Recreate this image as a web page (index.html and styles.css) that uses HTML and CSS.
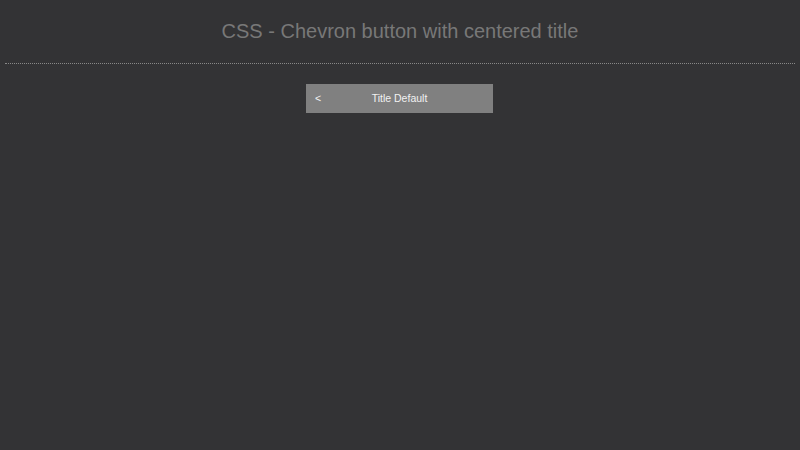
FILE: index.html
```html
<!DOCTYPE html>
<html>
<head>
<meta charset="utf-8">
<link rel="stylesheet" href="styles.css">
</head>
<body>
<header class="header"><h1 class="title">CSS - Chevron button with centered title</h1></header>
<main class="main">
  <div class="btn"><span class="chev">&lt;</span><span class="btn-title">Title Default</span></div>
</main>
</body>
</html>
```
FILE: styles.css
```css
html, body { margin: 0; padding: 0; }
body {
  background: #333335;
  font-family: "Liberation Sans", Arial, sans-serif;
  width: 800px;
  height: 450px;
}
.header {
  margin: 0 5px;
  border-bottom: 1px dotted #888;
  height: 63px;
  display: flex;
  justify-content: center;
}
.title {
  margin: 0;
  padding-top: 20px;
  font-size: 20px;
  font-weight: normal;
  color: #787878;
  line-height: 23px;
}
.main {
  display: flex;
  justify-content: center;
  padding-top: 20px;
  padding-right: 1px;
}
.btn {
  position: relative;
  width: 187px;
  height: 29px;
  background: #808080;
  display: flex;
  align-items: center;
  justify-content: center;
  color: #f2f2f2;
  font-size: 10.5px;
}
.chev {
  position: absolute;
  left: 9px;
  top: 8px;
  line-height: 13px;
}
.btn-title { line-height: 13px; }
```
